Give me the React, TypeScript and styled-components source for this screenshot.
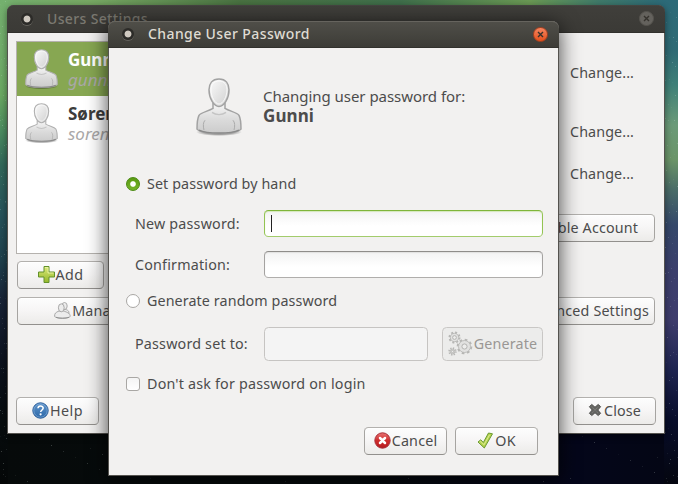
import React from "react";
import styled, { createGlobalStyle, css } from "styled-components";

const Global = createGlobalStyle`
  * { box-sizing: border-box; }
  html, body { margin: 0; padding: 0; }
  body { font-family: "Noto Sans", "Open Sans", sans-serif; font-size: 14.3px; color: #4c4c4c; overflow: hidden; }
`;

const Desktop = styled.div`
  position: relative;
  width: 678px;
  height: 484px;
  overflow: hidden;
  background:
    linear-gradient(180deg, #2c6a78 0, #2f6a74 50px, #3f8078 85px, #6b9a78 125px, #6b9468 160px, #4a6c68 190px, #35486a 225px, #3b3f6c 270px, #3e3c6c 320px, #1e2450 370px, #080d2a 420px, #04060f 484px) right / 14px 100% no-repeat,
    linear-gradient(180deg, #74b06e 0, #72ae6b 50px, #6aa862 95px, #4c8c60 130px, #32685a 165px, #26525a 215px, #1f404c 260px, #182336 300px, #0c121e 360px, #070c0e 420px, #040707 484px) left / 8px 100% no-repeat,
    linear-gradient(90deg, #74b06e 0, #78a964 90px, #4a7342 240px, #40704c 400px, #6b9a55 530px, #3f7a6a 600px, #2c6a78 664px) top / 100% 40px no-repeat,
    linear-gradient(90deg, #060a0a, #060b0d 50%, #04061a 85%, #040614);
`;

const Stars = styled.svg`
  position: absolute;
  inset: 0;
`;

const Window = styled.section<{ $x: number; $y: number; $w: number; $h: number; $active?: boolean }>`
  position: absolute;
  left: ${(p) => p.$x}px;
  top: ${(p) => p.$y}px;
  width: ${(p) => p.$w}px;
  height: ${(p) => p.$h}px;
  display: flex;
  flex-direction: column;
  border: 1px solid #55534f;
  border-top: 0;
  border-radius: 7px 7px 0 0;
  background: #f2f1f0;
  box-shadow: ${(p) => (p.$active ? "0 4px 20px 1px rgba(0,0,0,.68)" : "0 2px 7px rgba(0,0,0,.45)")};
`;

const TitleBar = styled.header<{ $active?: boolean }>`
  flex: none;
  display: flex;
  align-items: center;
  height: ${(p) => (p.$active ? 27 : 28)}px;
  margin: 0 -1px;
  padding: 0 11px 0 13px;
  border-radius: 7px 7px 0 0;
  border-bottom: 1px solid #32312d;
  box-shadow: inset 0 1px ${(p) => (p.$active ? "#66645e" : "#454440")};
  background: ${(p) => (p.$active ? "linear-gradient(#504f49, #3d3c37)" : "linear-gradient(#403f3b, #3b3a36)")};
  color: ${(p) => (p.$active ? "#dfdbd2" : "#7b7971")};
`;

const MenuDot = styled.i`
  width: 12px;
  height: 12px;
  margin-left: 1px;
  border-radius: 50%;
  background: radial-gradient(circle, #cfc9c0 0 2.9px, #2c2b28 3.9px);
  box-shadow: 0 1px #65635e;
`;

const Title = styled.h1<{ $ls: number }>`
  flex: 1;
  margin: 0 0 0 14px;
  font-size: 14px;
  font-weight: 500;
  line-height: 20px;
  letter-spacing: ${(p) => p.$ls}px;
`;

const CloseDot = styled.button<{ $active?: boolean }>`
  display: grid;
  place-items: center;
  width: 15px;
  height: 15px;
  padding: 0;
  border: 1px solid ${(p) => (p.$active ? "#a8401f" : "#55534e")};
  border-radius: 50%;
  background: ${(p) => (p.$active ? "linear-gradient(#f58560, #e4501c)" : "#64625d")};
  color: #35322d;
`;

const SettingsBody = styled.div`
  flex: 1;
  display: grid;
  grid-template-columns: 240px 1fr;
  grid-template-rows: 356px 28px;
  padding: 8px 8px 8px;
`;

const Side = styled.div`
  display: flex;
  flex-direction: column;
`;

const UserList = styled.ul`
  list-style: none;
  height: 213px;
  margin: 0 0 7px;
  padding: 0;
  border: 1px solid #b5b2ae;
  background: #fff;
`;

const UserRow = styled.li<{ $selected?: boolean }>`
  display: flex;
  height: 54px;
  padding: 7px 9px 7px 8px;
  gap: 10px;
  ${(p) =>
    p.$selected
      ? css`background: #87a752; color: #fff;`
      : css`background: #fff; color: #3c3c3c;`}
`;

const UserNames = styled.div`
  display: flex;
  flex-direction: column;
  padding-top: 1px;
`;

const UserName = styled.b`
  font-size: 17px;
  line-height: 20px;
`;

const Login = styled.em`
  font-size: 17px;
  line-height: 20px;
  color: #aaa8a8;
`;

const Actions = styled.div`
  display: flex;
  flex-direction: column;
  align-items: flex-end;
`;

const ChangeLink = styled.span<{ $gap: number }>`
  margin: ${(p) => p.$gap}px 22px 0 0;
  line-height: 20px;
  letter-spacing: 0.1px;
`;

const Button = styled.button<{ $w: number; $h?: number; $ls?: number; $gap?: number }>`
  display: flex;
  align-items: center;
  justify-content: center;
  gap: ${(p) => p.$gap ?? 1}px;
  width: ${(p) => p.$w}px;
  height: ${(p) => p.$h || 28}px;
  padding: 0 0 2px;
  border: 1px solid;
  border-color: #b3b1ae #a6a4a1 #92908d;
  border-radius: 4.5px;
  background: linear-gradient(#fdfdfd, #f7f6f6 45%, #ecebe9);
  box-shadow: inset 0 1px #fff;
  font: inherit;
  letter-spacing: ${(p) => p.$ls ?? 0.15}px;
  white-space: nowrap;
  color: #4c4c4c;
  svg { flex: none; }
  &:disabled {
    border-color: #c9c7c5;
    background: #ececeb;
    box-shadow: none;
    color: #9a9794;
  }
`;

const AddButton = styled(Button)`margin: 0 0 8px 1px;`;
const GroupsButton = styled(Button)`margin-left: 1px;`;
const AccountButton = styled(Button)<{ $top: number }>`
  justify-content: flex-end;
  padding-right: ${(p) => (p.$top > 40 ? 5 : 16)}px;
  margin: ${(p) => p.$top}px 1px 0 0;
`;
const CloseButton = styled(Button)`justify-self: end;`;

const DialogBody = styled.div`
  flex: 1;
  display: flex;
  flex-direction: column;
  padding: 28px 15px 0 17px;
`;

const Intro = styled.div`
  display: flex;
  gap: 21px;
  height: 62px;
  margin-left: 70px;
  svg { flex: none; margin-top: 2px; }
`;

const IntroText = styled.p`
  margin: 11px 0 0;
  font-size: 15px;
  line-height: 19px;
  letter-spacing: -0.04px;
  b { display: block; font-size: 17px; letter-spacing: 0.1px; }
`;

const Choice = styled.label<{ $mt: number; $ls?: number }>`
  display: flex;
  align-items: center;
  gap: 7px;
  height: 20px;
  margin-top: ${(p) => p.$mt}px;
  line-height: 20px;
  letter-spacing: ${(p) => p.$ls || 0}px;
`;

const Radio = styled.i<{ $on?: boolean }>`
  width: 14px;
  height: 14px;
  border-radius: 50%;
  border: 1px solid ${(p) => (p.$on ? "#4a8a10" : "#a9a7a4")};
  background: ${(p) =>
    p.$on ? "radial-gradient(circle, #fff 0 2.3px, transparent 3.3px), linear-gradient(#5a9a12, #76b52a)" : "#fff"};
`;

const Check = styled.i`
  width: 14px;
  height: 14px;
  border-radius: 3px;
  border: 1px solid #a9a7a4;
  background: linear-gradient(#f4f4f4, #fff);
`;

const Field = styled.div<{ $mt: number; $h: number }>`
  display: flex;
  align-items: center;
  height: ${(p) => p.$h}px;
  margin: ${(p) => p.$mt}px 0 0 9px;
`;

const FieldLabel = styled.span`
  width: 129px;
  line-height: 20px;
  white-space: nowrap;
  letter-spacing: 0.19px;
`;

const Entry = styled.div<{ $state?: "focus" | "off" }>`
  flex: 1;
  height: 100%;
  padding: 4px 6px;
  border-radius: 4.5px;
  border: 1px solid;
  border-color: #8f8d8a #a4a2a0 #b0aeac;
  background: linear-gradient(#f3f3f3, #fff 60%);
  box-shadow: inset 0 1px 1px #e2e1e0;
  ${(p) =>
    p.$state === "focus" &&
    css`border-color: #7fb53a #93c352 #a3cc6c; box-shadow: inset 0 1px 1px #d5e8bd;`}
  ${(p) =>
    p.$state === "off" &&
    css`border-color: #c6c4c2; background: #f4f4f4; box-shadow: none; margin-right: 14px;`}
`;

const Caret = styled.i`
  display: block;
  width: 1px;
  height: 17px;
  background: #222;
`;

const Footer = styled.footer`
  display: flex;
  justify-content: flex-end;
  gap: 8px;
  margin: 33px 5px 0 0;
`;

const Avatar = ({ w, h, id, stroke }: { w: number; h: number; id: string; stroke: string }) => (
  <svg width={w} height={h} viewBox="0 0 46 60" preserveAspectRatio="none">
    <defs>
      <linearGradient id={id + "h"} x1="0" y1="0" x2="1" y2="1">
        <stop offset="0" stopColor="#fbfbfb" />
        <stop offset="1" stopColor="#cfcfcf" />
      </linearGradient>
      <linearGradient id={id + "b"} x1="0" y1="0" x2="0" y2="1">
        <stop offset="0" stopColor="#f6f6f6" />
        <stop offset=".5" stopColor="#dcdcdc" />
        <stop offset="1" stopColor="#cbcbcb" />
      </linearGradient>
      <radialGradient id={id + "s"}>
        <stop offset=".6" stopColor="#000" stopOpacity=".35" />
        <stop offset="1" stopColor="#000" stopOpacity="0" />
      </radialGradient>
    </defs>
    <ellipse cx="23" cy="55" rx="23" ry="4" fill={`url(#${id}s)`} />
    <path d="M17 26v5c-5 3-12 4-14 7-2 4-2 10-2 14 5 6 39 6 44 0 0-4 0-10-2-14-2-3-9-4-14-7v-5z" fill={`url(#${id}b)`} stroke={stroke} strokeWidth="1.5" />
    <path d="M8 53c-1-4-1-8 1-10M38 53c1-4 1-8-1-10" fill="none" stroke="#aaa" strokeWidth="1" />
    <path d="M3 53c8 4 32 4 40 0" fill="none" stroke="#8a8a8a" strokeWidth="1.5" />
    <path d="M16 35c4 3 10 3 14 0" fill="none" stroke="#c4c4c4" strokeWidth="1.5" />
    <path d="M23 1c7 0 10 5 10 11 0 9-5 17-10 17s-10-8-10-17C13 6 16 1 23 1z" fill={`url(#${id}h)`} stroke={stroke} strokeWidth="1.5" />
    <path d="M23 3c5.500 0 8 4 8 9 0 7-4 14.500-8 14.500s-8-7.500-8-14.500c0-5 2.500-9 8-9z" fill="none" stroke="#fff" strokeOpacity=".8" />
  </svg>
);

const X = ({ size = 7 }: { size?: number }) => (
  <svg width={size} height={size} viewBox="0 0 7 7">
    <path d="M1 1l5 5M6 1L1 6" stroke="currentColor" strokeWidth="1.4" />
  </svg>
);

const PlusIcon = () => (
  <svg width="17" height="17" viewBox="0 0 17 17">
    <defs><linearGradient id="plus" x1="0" y1="0" x2="0" y2="1"><stop stopColor="#dcea7a" /><stop offset="1" stopColor="#94b72a" /></linearGradient></defs>
    <path d="M6 .5h5v5.500h5.500v5H11v5.500H6V11H.5V6H6z" fill="url(#plus)" stroke="#62912a" />
    <path d="M7 1.500h3V7h5.500" fill="none" stroke="#edf5b0" strokeWidth=".8" />
  </svg>
);

const GroupIcon = () => (
  <svg width="17" height="17" viewBox="0 0 17 17" fill="#ececec" stroke="#a2a2a2" strokeWidth=".9">
    <path d="M5 10.500c1-2 2.500-2.500 4-3h3c2 1 3 1 3 4.500z" />
    <ellipse cx="10.500" cy="4" rx="2.700" ry="3.500" />
    <path d="M.6 14.500c0-3.500 1-4 4.400-5.500h5c3 1.500 6.200 2 6.200 5.500-2 2.400-13.600 2.400-15.600 0z" />
    <ellipse cx="7.300" cy="5.800" rx="2.900" ry="4" />
    <path d="M2 15.300c3 1.200 10 1.200 13 0" fill="none" stroke="#8c8c8c" />
  </svg>
);

const HelpIcon = () => (
  <svg width="17" height="17" viewBox="0 0 17 17">
    <defs><linearGradient id="help" x1="0" y1="0" x2="0" y2="1"><stop stopColor="#6196cc" /><stop offset="1" stopColor="#2b66a6" /></linearGradient></defs>
    <circle cx="8.500" cy="8.500" r="7.700" fill="url(#help)" stroke="#2a5c98" />
    <circle cx="8.500" cy="8.500" r="6.700" fill="none" stroke="#86b2dd" strokeWidth=".6" />
    <path d="M6 6.300c0-3 5.200-3 5.200-.2 0 1.800-2.500 2-2.500 4" fill="none" stroke="#fff" strokeWidth="1.500" />
    <circle cx="8.600" cy="12.300" r="1.100" fill="#fff" />
  </svg>
);

const CrossIcon = () => (
  <svg width="14" height="14" viewBox="0 0 15 15">
    <path d="M4 1.500l3.500 3 3.500-3L13.500 4l-3 3.500 3 3.500L11 13.500l-3.500-3-3.500 3L1.500 11l3-3.500-3-3.500z" fill="#666663" stroke="#4a4a48" strokeLinejoin="round" />
    <path d="M4 4l7 7M11 4l-7 7" stroke="#858582" strokeWidth="1" strokeDasharray="1 1" />
  </svg>
);

const CancelIcon = () => (
  <svg width="17" height="17" viewBox="0 0 17 17">
    <defs><linearGradient id="stop" x1="0" y1="0" x2="0" y2="1"><stop stopColor="#e87474" /><stop offset=".5" stopColor="#cf2d2d" /><stop offset="1" stopColor="#b51a1f" /></linearGradient></defs>
    <circle cx="8.500" cy="8.500" r="7.700" fill="url(#stop)" stroke="#a8303a" />
    <path d="M6 6l5 5M11 6l-5 5" stroke="#fff" strokeWidth="2.500" strokeLinecap="round" />
  </svg>
);

const OkIcon = () => (
  <svg width="17" height="17" viewBox="0 0 17 17">
    <path d="M1 10l2.800-2.200 2.500 2.700L11.500 1l4 .8L7.300 16z" fill="#b5d34c" stroke="#6a9a34" strokeLinejoin="round" />
    <path d="M2.500 10l1-.8L7 12.800l5.600-10" fill="none" stroke="#dcec94" />
  </svg>
);

const Gear = ({ cx, cy, r }: { cx: number; cy: number; r: number }) => (
  <g>
    <circle cx={cx} cy={cy} r={r} fill="none" stroke="#b6b6b4" strokeWidth="2" strokeDasharray={`${(r * Math.PI) / 8} ${(r * Math.PI) / 8}`} />
    <circle cx={cx} cy={cy} r={r - 0.8} fill="#e1e1e0" stroke="#b8b8b6" strokeWidth=".9" />
    <circle cx={cx} cy={cy} r={r * 0.38} fill="#ededec" stroke="#b4b4b2" />
  </g>
);

const GearsIcon = () => (
  <svg width="25" height="25" viewBox="0 0 25 25">
    <Gear cx={6.5} cy={6.5} r={5} />
    <Gear cx={16.500} cy={15.500} r={6.800} />
    <Gear cx={4.500} cy={20.500} r={3.200} />
  </svg>
);

const stars = Array.from({ length: 210 }, (_, i) => ({
  x: i % 3 === 0 ? (i * 37) % 678 : i % 3 === 1 ? (i * 5) % 7 : 665 + ((i * 7) % 13),
  y: i % 3 === 0 ? 436 + ((i * 29) % 48) : (i * 83 + ((i * i) % 31)) % 484,
  o: 0.05 + ((i * 13) % 10) / 50,
}));

export default function App() {
  return (
    <>
      <Global />
      <Desktop>
        <Stars width="678" height="484" fill="#dfeee8">
          {stars.map((s, i) => <rect key={i} x={s.x} y={s.y} width="1" height="1" opacity={s.o} />)}
        </Stars>

        <Window $x={7} $y={5} $w={658} $h={429}>
          <TitleBar>
            <MenuDot />
            <Title $ls={0.35}>Users Settings</Title>
            <CloseDot aria-label="Close"><X /></CloseDot>
          </TitleBar>
          <SettingsBody>
            <Side>
              <UserList>
                <UserRow $selected>
                  <Avatar w={33} h={41} id="a" stroke="#b0b0b0" />
                  <UserNames><UserName>Gunni</UserName><Login>gunni</Login></UserNames>
                </UserRow>
                <UserRow>
                  <Avatar w={33} h={41} id="b" stroke="#b0b0b0" />
                  <UserNames><UserName>Søren</UserName><Login>soren</Login></UserNames>
                </UserRow>
              </UserList>
              <AddButton $w={87} $ls={0.4}><PlusIcon />Add</AddButton>
              <GroupsButton $w={202}><GroupIcon />Manage Groups</GroupsButton>
            </Side>
            <Actions>
              <ChangeLink $gap={22}>Change...</ChangeLink>
              <ChangeLink $gap={39}>Change...</ChangeLink>
              <ChangeLink $gap={22}>Change...</ChangeLink>
              <AccountButton $w={140} $top={30}>Disable Account</AccountButton>
              <AccountButton $w={150} $top={55}>Advanced Settings</AccountButton>
            </Actions>
            <Button $w={83} $ls={0.5}><HelpIcon />Help</Button>
            <CloseButton $w={83} $gap={2}><CrossIcon />Close</CloseButton>
          </SettingsBody>
        </Window>

        <Window $x={108} $y={21} $w={451} $h={455} $active>
          <TitleBar $active>
            <MenuDot />
            <Title $ls={0.4}>Change User Password</Title>
            <CloseDot $active aria-label="Close"><X /></CloseDot>
          </TitleBar>
          <DialogBody>
            <Intro>
              <Avatar w={46} h={59} id="c" stroke="#a2a2a2" />
              <IntroText>Changing user password for:<b>Gunni</b></IntroText>
            </Intro>
            <Choice $mt={36} $ls={0.1}><Radio $on />Set password by hand</Choice>
            <Field $mt={16} $h={27}><FieldLabel>New password:</FieldLabel><Entry $state="focus"><Caret /></Entry></Field>
            <Field $mt={14} $h={27}><FieldLabel>Confirmation:</FieldLabel><Entry /></Field>
            <Choice $mt={13} $ls={0.1}><Radio />Generate random password</Choice>
            <Field $mt={16} $h={34}>
              <FieldLabel>Password set to:</FieldLabel>
              <Entry $state="off" />
              <Button $w={101} $h={34} disabled><GearsIcon />Generate</Button>
            </Field>
            <Choice $mt={13} $ls={0.19}><Check />Don't ask for password on login</Choice>
            <Footer>
              <Button $w={83} $ls={0.2}><CancelIcon />Cancel</Button>
              <Button $w={83}><OkIcon />OK</Button>
            </Footer>
          </DialogBody>
        </Window>
      </Desktop>
    </>
  );
}
